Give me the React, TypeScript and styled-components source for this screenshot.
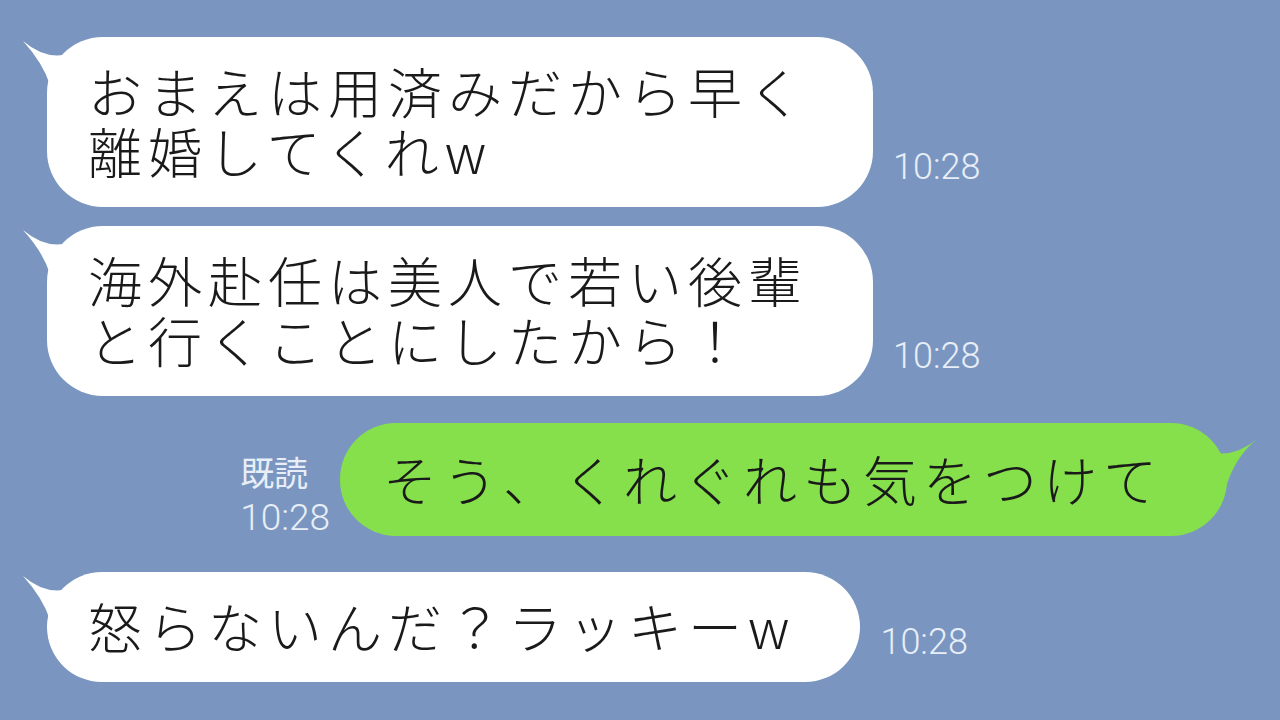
import React from "react";
import styled, { createGlobalStyle } from "styled-components";

type Message = {
  id: number;
  mine: boolean;
  lines: string[];
  time: string;
  gap: number;
};

const messages: Message[] = [
  { id: 1, mine: false, lines: ["おまえは用済みだから早く", "離婚してくれw"], time: "10:28", gap: 0 },
  { id: 2, mine: false, lines: ["海外赴任は美人で若い後輩", "と行くことにしたから！"], time: "10:28", gap: 19 },
  { id: 3, mine: true, lines: ["そう、くれぐれも気をつけて"], time: "10:28", gap: 27 },
  { id: 4, mine: false, lines: ["怒らないんだ？ラッキーw"], time: "10:28", gap: 36 },
];

const App: React.FC = () => {
  return (
    <>
      <GlobalStyle />
      <ChatScreen>
        {messages.map((msg) =>
          msg.mine ? (
            <Row key={msg.id} $mine $gap={msg.gap}>
              <ReadInfo>
                <ReadLabel>既読</ReadLabel>
                <span>{msg.time}</span>
              </ReadInfo>
              <Bubble $mine>
                <RightTail viewBox="0 0 70 80" width="70" height="80">
                  <path d="M66 16 Q46 33 24 30 L8 50 L35 64 Q44 34 66 16 Z" fill="#86e04b" />
                </RightTail>
                {msg.lines.map((l, i) => (
                  <Line key={i}>{l}</Line>
                ))}
              </Bubble>
            </Row>
          ) : (
            <Row key={msg.id} $gap={msg.gap}>
              <Bubble>
                <LeftTail viewBox="0 0 70 70" width="70" height="70">
                  <path d="M2 4 Q22 21 42 18 L62 50 L29 48 Q22 26 2 4 Z" fill="#ffffff" />
                </LeftTail>
                {msg.lines.map((l, i) => (
                  <Line key={i}>{l}</Line>
                ))}
              </Bubble>
              <Time>{msg.time}</Time>
            </Row>
          )
        )}
      </ChatScreen>
    </>
  );
};

export default App;

// Styled Components
const GlobalStyle = createGlobalStyle`
  html, body {
    margin: 0;
    padding: 0;
    background: #7a96c0;
  }
`;

const ChatScreen = styled.div`
  width: 1280px;
  height: 720px;
  box-sizing: border-box;
  padding: 37px 53px 0 47px;
  display: flex;
  flex-direction: column;
  background: #7a96c0;
  overflow: hidden;
`;

const Row = styled.div<{ $mine?: boolean; $gap: number }>`
  display: flex;
  align-items: flex-end;
  justify-content: ${(p) => (p.$mine ? "flex-end" : "flex-start")};
  margin-top: ${(p) => p.$gap}px;
`;

const Bubble = styled.div<{ $mine?: boolean }>`
  position: relative;
  background: ${(p) => (p.$mine ? "#86e04b" : "#ffffff")};
  border-radius: 56px;
  padding: ${(p) => (p.$mine ? "26px 64px 27px 43px" : "24px 65px 26px 41px")};
  font-family: "Noto Sans CJK JP", "Noto Sans", sans-serif;
  font-weight: 300;
  font-size: 54px;
  letter-spacing: 6px;
  line-height: 60px;
  color: #1a1a1a;
  white-space: nowrap;
`;

const Line = styled.div`
  display: block;
`;

const LeftTail = styled.svg`
  position: absolute;
  left: -26px;
  top: 0;
`;

const RightTail = styled.svg`
  position: absolute;
  right: -34px;
  top: 0;
`;

const Time = styled.div`
  margin: 0 0 22px 20px;
  font-family: Roboto, "Noto Sans", sans-serif;
  font-weight: 300;
  font-size: 36px;
  line-height: 1;
  color: #e8eef7;
`;

const ReadInfo = styled.div`
  display: flex;
  flex-direction: column;
  align-items: flex-start;
  margin: 0 10px -5px 0;
  font-family: Roboto, "Noto Sans CJK JP", sans-serif;
  font-weight: 300;
  font-size: 37px;
  line-height: 46px;
  color: #e8eef7;
`;

const ReadLabel = styled.span`
  font-family: "Noto Sans CJK JP", sans-serif;
  font-size: 34px;
  font-weight: 400;
`;
